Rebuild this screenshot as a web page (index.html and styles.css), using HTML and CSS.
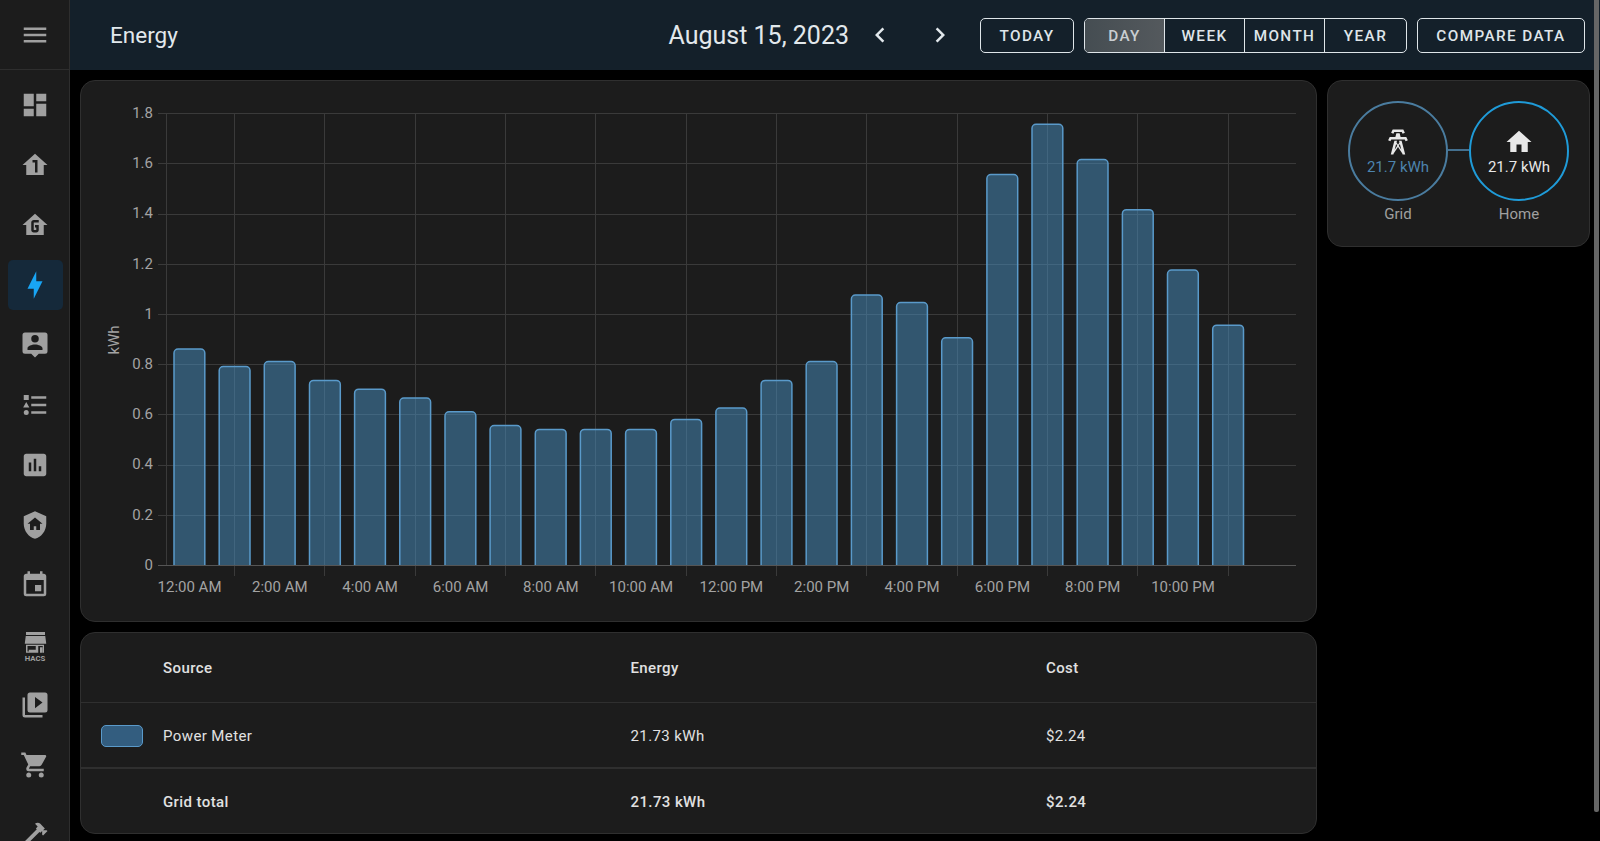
FILE: index.html
```html
<!DOCTYPE html>
<html lang="en">
<head>
<meta charset="utf-8">
<title>Energy</title>
<link rel="stylesheet" href="styles.css">
</head>
<body>
<div class="app">
  <aside class="sidebar">
    <div class="side-top"><svg class="ic" viewBox="0 0 24 24"><path d="M3,6H21V8H3V6M3,11H21V13H3V11M3,16H21V18H3V16Z"/></svg></div>
    <nav class="side-nav">
      <div class="nav-item"><svg class="ic" viewBox="0 0 24 24"><path d="M13,3V9H21V3M13,21H21V11H13M3,21H11V15H3M3,13H11V3H3V13Z"/></svg></div>
      <div class="nav-item"><svg class="ic" viewBox="0 0 24 24"><path d="M12 3L2 12H5V20H19V12H22L12 3M14 18H12V10H10V8H14V18Z"/></svg></div>
      <div class="nav-item"><svg class="ic" viewBox="0 0 24 24"><path d="M12 3L2 12H5V20H19V12H22L12 3M15 10H11V16H13V14H12V12H15V16C15 17.1 14.1 18 13 18H11C9.9 18 9 17.1 9 16V10C9 8.9 9.9 8 11 8H15V10Z"/></svg></div>
      <div class="nav-item active"><svg class="ic" viewBox="0 0 24 24"><path d="M11 15H6L13 1V9H18L11 23V15Z"/></svg></div>
      <div class="nav-item"><svg class="ic" viewBox="0 0 24 24"><path fill-rule="evenodd" d="M4 2H20A2 2 0 0 1 22 4V17A2 2 0 0 1 20 19H15L12 22L9 19H4A2 2 0 0 1 2 17V4A2 2 0 0 1 4 2ZM12 4A3 3 0 1 0 12 10A3 3 0 0 0 12 4ZM12 11.5C9.3 11.5 6 12.8 6 14.5V16H18V14.5C18 12.8 14.7 11.5 12 11.5Z"/></svg></div>
      <div class="nav-item"><svg class="ic" viewBox="0 0 24 24"><path d="M5,9.5L7.5,14H2.5L5,9.5M3,4H7V8H3V4M5,20A2,2 0 0,0 7,18A2,2 0 0,0 5,16A2,2 0 0,0 3,18A2,2 0 0,0 5,20M9,5V7H21V5H9M9,19H21V17H9V19M9,13H21V11H9V13Z"/></svg></div>
      <div class="nav-item"><svg class="ic" viewBox="0 0 24 24"><path d="M19 3H5C3.9 3 3 3.9 3 5V19C3 20.1 3.9 21 5 21H19C20.1 21 21 20.1 21 19V5C21 3.9 20.1 3 19 3M9 17H7V10H9V17M13 17H11V7H13V17M17 17H15V13H17V17Z"/></svg></div>
      <div class="nav-item"><svg class="ic" viewBox="0 0 24 24"><path d="M11 13H13V16H16V11H18L12 6L6 11H8V16H11V13M12 1L21 5V11C21 16.55 17.16 21.74 12 23C6.84 21.74 3 16.55 3 11V5L12 1Z"/></svg></div>
      <div class="nav-item"><svg class="ic" viewBox="0 0 24 24"><path d="M19,19H5V8H19M16,1V3H8V1H6V3H5C3.89,3 3,3.89 3,5V19A2,2 0 0,0 5,21H19A2,2 0 0,0 21,19V5C21,3.89 20.1,3 19,3H18V1M17,12H12V17H17V12Z"/></svg></div>
      <div class="nav-item"><svg class="ic" viewBox="0 0 24 24"><path fill-rule="evenodd" d="M4.8 1.6H20V4H4.8ZM4.6 4.8H20.2L21 11H3.8ZM4.8 11.8H19.2V18.2H4.8ZM6 12.8V17.2H7V15.8H12.6V12.8ZM14.6 12.8V18.2H16V13.8H18V18.2H18.2V12.8Z"/><text class="hacs" x="12" y="24.4">HACS</text></svg></div>
      <div class="nav-item"><svg class="ic" viewBox="0 0 24 24"><path d="M4 6H2V20A2 2 0 0 0 4 22H18V20H4V6M20 2H8A2 2 0 0 0 6 4V16A2 2 0 0 0 8 18H20A2 2 0 0 0 22 16V4A2 2 0 0 0 20 2M12 14.5V5.5L18 10L12 14.5Z"/></svg></div>
      <div class="nav-item"><svg class="ic" viewBox="0 0 24 24"><path d="M17,18C15.89,18 15,18.89 15,20A2,2 0 0,0 17,22A2,2 0 0,0 19,20C19,18.89 18.1,18 17,18M1,2V4H3L6.6,11.59L5.24,13.95C5.09,14.23 5,14.57 5,14.9A2,2 0 0,0 7,16.9H19V14.9H7.42A0.25,0.25 0 0,1 7.17,14.65C7.17,14.6 7.18,14.56 7.2,14.53L8.1,12.9H15.55C16.3,12.9 16.96,12.5 17.3,11.87L20.88,5.38C20.95,5.22 21,5.11 21,5A1,1 0 0,0 20,4H5.21L4.27,2M7,18C5.89,18 5,18.89 5,20A2,2 0 0,0 7,22A2,2 0 0,0 9,20C9,18.89 8.1,18 7,18Z"/></svg></div>
      <div class="nav-item nav-tools"><svg class="ic" viewBox="0 0 24 24"><path d="M2 19.63L13.43 8.2L12.72 7.5L14.14 6.07L12 3.89C13.2 2.7 15.09 2.7 16.27 3.89L19.87 7.5L18.45 8.91H21.29L22 9.62L18.45 13.21L17.74 12.5V9.62L16.27 11.04L15.56 10.33L4.13 21.76L2 19.63Z"/></svg></div>
    </nav>
  </aside>

  <div class="content">
    <header class="topbar">
      <h1 class="title">Energy</h1>
      <div class="date">August 15, 2023</div>
      <div class="chevrons">
        <svg class="chev" viewBox="0 0 24 24"><path d="M15.41,16.58L10.83,12L15.41,7.41L14,6L8,12L14,18L15.41,16.58Z"/></svg>
        <svg class="chev" viewBox="0 0 24 24"><path d="M8.59,16.58L13.17,12L8.59,7.41L10,6L16,12L10,18L8.59,16.58Z"/></svg>
      </div>
      <button class="btn btn-today">TODAY</button>
      <div class="seg">
        <span class="seg-item on">DAY</span><span class="seg-item">WEEK</span><span class="seg-item">MONTH</span><span class="seg-item">YEAR</span>
      </div>
      <button class="btn btn-compare">COMPARE DATA</button>
    </header>

    <main class="grid">
      <div class="col-main">
        <section class="card chart-card">
          <svg class="chart" viewBox="81 81 1235 540">
            <defs><clipPath id="plot"><rect x="160" y="100" width="1140" height="465"/></clipPath></defs>
            <g class="grid-lines">
              <path d="M158 113.5H1296M158 163.5H1296M158 214.5H1296M158 264.5H1296M158 314.5H1296M158 364.5H1296M158 414.5H1296M158 465.5H1296M158 515.5H1296"/>
              <path d="M166.5 113V565M234.5 113V576M324.5 113V576M415.5 113V576M505.5 113V576M595.5 113V576M686.5 113V576M776.5 113V576M866.5 113V576M957.5 113V576M1047.5 113V576M1137.5 113V576M1228.5 113V576"/>
            </g>
            <path class="baseline" d="M158 565.5H1296"/>
            <g class="bars" clip-path="url(#plot)">
              <rect x="174" y="349.1" height="221"/>
              <rect x="219.2" y="366.6" height="204"/>
              <rect x="264.3" y="361.6" height="209"/>
              <rect x="309.5" y="380.4" height="190"/>
              <rect x="354.6" y="389.2" height="181"/>
              <rect x="399.8" y="398" height="172"/>
              <rect x="445" y="411.8" height="158"/>
              <rect x="490.1" y="425.6" height="144"/>
              <rect x="535.3" y="429.4" height="141"/>
              <rect x="580.4" y="429.4" height="141"/>
              <rect x="625.6" y="429.4" height="141"/>
              <rect x="670.8" y="419.4" height="151"/>
              <rect x="715.9" y="408.1" height="162"/>
              <rect x="761.1" y="380.4" height="190"/>
              <rect x="806.2" y="361.6" height="209"/>
              <rect x="851.4" y="295.1" height="275"/>
              <rect x="896.6" y="302.6" height="268"/>
              <rect x="941.7" y="337.8" height="232"/>
              <rect x="986.9" y="174.5" height="396"/>
              <rect x="1032" y="124.3" height="446"/>
              <rect x="1077.2" y="159.5" height="411"/>
              <rect x="1122.4" y="209.7" height="360"/>
              <rect x="1167.5" y="270" height="300"/>
              <rect x="1212.7" y="325.2" height="245"/>
            </g>
            <g class="y-labels">
              <text x="153" y="118">1.8</text>
              <text x="153" y="168.2">1.6</text>
              <text x="153" y="218.4">1.4</text>
              <text x="153" y="268.6">1.2</text>
              <text x="153" y="318.8">1</text>
              <text x="153" y="369">0.8</text>
              <text x="153" y="419.2">0.6</text>
              <text x="153" y="469.4">0.4</text>
              <text x="153" y="519.6">0.2</text>
              <text x="153" y="569.8">0</text>
            </g>
            <text class="y-title" transform="translate(118.5 340) rotate(-90)">kWh</text>
            <g class="x-labels">
              <text x="189.5" y="592.3">12:00 AM</text>
              <text x="279.8" y="592.3">2:00 AM</text>
              <text x="370.1" y="592.3">4:00 AM</text>
              <text x="460.5" y="592.3">6:00 AM</text>
              <text x="550.8" y="592.3">8:00 AM</text>
              <text x="641.1" y="592.3">10:00 AM</text>
              <text x="731.4" y="592.3">12:00 PM</text>
              <text x="821.7" y="592.3">2:00 PM</text>
              <text x="912" y="592.3">4:00 PM</text>
              <text x="1002.4" y="592.3">6:00 PM</text>
              <text x="1092.7" y="592.3">8:00 PM</text>
              <text x="1183" y="592.3">10:00 PM</text>
            </g>
          </svg>
        </section>

        <section class="card table-card">
          <div class="row row-head"><span></span><span>Source</span><span>Energy</span><span>Cost</span></div>
          <div class="row row-body"><span class="swatch"></span><span>Power Meter</span><span>21.73 kWh</span><span>$2.24</span></div>
          <div class="row row-total"><span></span><span>Grid total</span><span>21.73 kWh</span><span>$2.24</span></div>
        </section>
      </div>

      <aside class="col-side">
        <section class="card flow-card">
          <div class="flow-node">
            <div class="circle circle-grid">
              <svg class="flow-ic" viewBox="0 0 24 24"><path d="M8.28,5.45L6.5,4.55L7.76,2H16.23L17.5,4.55L15.72,5.44L15,4H9L8.28,5.45M18.62,8H14.09L13.3,5H10.7L9.91,8H5.38L4.1,10.55L5.89,11.44L6.62,10H17.38L18.1,11.45L19.89,10.56L18.62,8M17.77,22H15.7L15.46,21.1L12,15.9L8.53,21.1L8.3,22H6.23L9.12,11H11.19L10.83,12.35L12,14.1L13.16,12.35L12.81,11H14.88L17.77,22M11.4,15L10.5,13.65L9.32,18.13L11.4,15M14.68,18.12L13.5,13.64L12.6,15L14.68,18.12Z"/></svg>
              <span class="flow-val">21.7 kWh</span>
            </div>
            <span class="flow-label">Grid</span>
          </div>
          <div class="flow-link"></div>
          <div class="flow-node">
            <div class="circle circle-home">
              <svg class="flow-ic" viewBox="0 0 24 24"><path d="M10,20V14H14V20H19V12H22L12,3L2,12H5V20H10Z"/></svg>
              <span class="flow-val">21.7 kWh</span>
            </div>
            <span class="flow-label">Home</span>
          </div>
        </section>
      </aside>
    </main>
  </div>

  <div class="scrollbar"></div>
</div>
</body>
</html>
```
FILE: styles.css
```css
* { box-sizing: border-box; }
html, body { margin: 0; height: 100%; overflow: hidden; background: #000; }
body { font-family: Roboto, "Liberation Sans", sans-serif; color: #e1e1e1; }
.app { display: flex; width: 1600px; height: 841px; overflow: hidden; }

.sidebar { width: 70px; flex: none; background: #1c1c1c; border-right: 1px solid #2e2e2e; display: flex; flex-direction: column; }
.side-top { height: 70px; flex: none; display: flex; align-items: center; justify-content: center; border-bottom: 1px solid #2e2e2e; }
.side-nav { display: flex; flex-direction: column; padding-top: 10px; }
.nav-item { height: 50px; width: 55px; padding-right: 1px; margin: 0 0 10px 8px; border-radius: 5px; display: flex; align-items: center; justify-content: center; flex: none; }
.nav-item.active { background: #15293a; }
.nav-item.active .ic { fill: #18a5f5; }
.nav-tools { margin-top: 9px; }
.ic { width: 30px; height: 30px; fill: #a0a0a0; display: block; flex: none; overflow: visible; }
.hacs { font-family: Roboto, sans-serif; font-size: 6.2px; font-weight: 700; text-anchor: middle; fill: #a0a0a0; }

.content { flex: 1; min-width: 0; display: flex; flex-direction: column; }
.topbar { height: 70px; flex: none; background: #14202a; display: flex; align-items: center; padding-right: 15px; }
.title { margin: 0 0 0 40px; font-size: 22.5px; font-weight: 400; color: #e2e8ec; flex: 1; }
.date { font-size: 25px; color: #e2e8ec; margin-right: 16px; }
.chevrons { display: flex; gap: 30px; margin-right: 25px; }
.chev { width: 30px; height: 30px; fill: #e2e8ec; display: block; }
.btn { height: 35px; margin-top: 1px; border: 1px solid #dfe5e9; border-radius: 5px; background: transparent; color: #dfe5e9; font: 500 15.3px Roboto, sans-serif; letter-spacing: 1.4px; padding: 0; }
.btn-today { width: 94px; margin-right: 10px; }
.btn-compare { width: 168px; margin-left: 10px; }
.seg { display: flex; height: 35px; width: 323px; margin-top: 1px; border: 1px solid #dfe5e9; border-radius: 5px; overflow: hidden; }
.seg-item { width: 80px; display: flex; align-items: center; justify-content: center; font-size: 15.3px; font-weight: 500; letter-spacing: 1.4px; color: #dfe5e9; border-right: 1px solid #dfe5e9; }
.seg-item:last-child { border-right: 0; flex: 1; }
.seg-item.on { background: linear-gradient(90deg, #454d52, #54595d); color: #c9ced1; }

.grid { display: flex; gap: 10px; padding: 10px 0 0 10px; align-items: flex-start; }
.col-main { width: 1237px; flex: none; display: flex; flex-direction: column; gap: 10px; }
.col-side { width: 263px; flex: none; }
.card { background: #1c1c1c; border: 1px solid #2f2f2f; border-radius: 15px; }

.chart-card { height: 542px; overflow: hidden; }
.chart { display: block; width: 1235px; height: 540px; }
.grid-lines path { stroke: #3a3a3a; stroke-width: 1; fill: none; }
.baseline { stroke: #555; stroke-width: 1; fill: none; }
.bars rect { width: 30.8px; rx: 4px; fill: rgba(72, 143, 194, 0.5); stroke: #5a9aca; stroke-width: 1.5; }
.y-labels text { font-size: 15px; fill: #a3a3a3; text-anchor: end; }
.x-labels text { font-size: 15px; fill: #a3a3a3; text-anchor: middle; }
.y-title { font-size: 15px; fill: #a3a3a3; text-anchor: middle; }

.table-card { height: 202px; overflow: hidden; }
.row { display: grid; grid-template-columns: 82px 467.5px 415.5px 1fr; align-items: center; font-size: 15px; letter-spacing: 0.4px; color: #e1e1e1; }
.row-head { height: 70px; font-weight: 500; border-bottom: 1px solid #2f2f2f; }
.row-body { height: 66px; padding-top: 1px; border-bottom: 2px solid #2f2f2f; }
.row-total { height: 64px; padding-top: 2px; font-weight: 500; }
.swatch { width: 42px; height: 22px; margin-left: 20px; border-radius: 5px; background: #335d7f; border: 1px solid #5a9aca; }

.flow-card { height: 167px; display: flex; padding: 20px 21px 0 20px; align-items: flex-start; }
.flow-node { width: 100px; flex: none; display: flex; flex-direction: column; align-items: center; }
.circle { width: 100px; height: 100px; border-radius: 50%; border: 2.5px solid; display: flex; flex-direction: column; align-items: center; justify-content: center; }
.circle-grid { border-color: #4a7c9f; color: #4d84ae; }
.circle-home { border-color: #1f9bd8; color: #e8e8e8; }
.flow-ic { width: 30px; height: 30px; fill: #e8e8e8; display: block; }
.flow-val { font-size: 15px; line-height: 18px; margin-top: 1px; }
.flow-label { font-size: 15px; color: #a0a0a0; margin-top: 4px; line-height: 18px; }
.flow-link { width: 21px; height: 2px; margin-top: 48px; background: #44708f; flex: none; }

.scrollbar { position: absolute; top: 0; left: 1594px; width: 4.5px; height: 812px; background: #666; border-radius: 0 0 2px 2px; }
```
